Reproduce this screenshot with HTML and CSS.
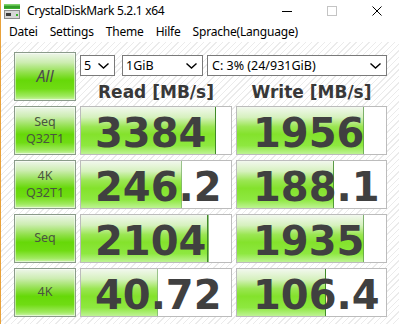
FILE: index.html
```html
<!DOCTYPE html>
<html lang="de">
  <head>
    <meta charset="UTF-8">
    <title>CrystalDiskMark 5.2.1 x64</title>
    <link rel="stylesheet" href="styles.css">
  </head>
  <body>
    <div class="window">
      <div class="titlebar">
        <svg class="app-icon" width="16" height="15" viewBox="0 0 16 15">
          <rect x="0" y="0" width="16" height="5" fill="#3cae2e"/>
          <rect x="0" y="0" width="16" height="1.5" fill="#7fd16a"/>
          <rect x="0" y="2.5" width="16" height="1" fill="#2a8a22"/>
          <rect x="0" y="6" width="16" height="9" fill="#8c8c8c"/>
          <rect x="1" y="7" width="14" height="7" fill="#d6d6d6"/>
          <rect x="2" y="9" width="5" height="3" fill="#3b3b3b"/>
          <rect x="12" y="10" width="2" height="2" fill="#36b52a"/>
        </svg>
        <span class="title">CrystalDiskMark 5.2.1 x64</span>
        <div class="controls">
          <span class="ctl"><svg width="10" height="10" viewBox="0 0 10 10"><line x1="0" y1="5.5" x2="10" y2="5.5" stroke="#000" stroke-width="1"/></svg></span>
          <span class="ctl"><svg width="10" height="10" viewBox="0 0 10 10"><rect x="0.5" y="0.5" width="9" height="9" fill="none" stroke="#c4c4c4" stroke-width="1"/></svg></span>
          <span class="ctl"><svg width="10" height="10" viewBox="0 0 10 10"><path d="M0.5 0.5 L9.5 9.5 M9.5 0.5 L0.5 9.5" stroke="#000" stroke-width="1"/></svg></span>
        </div>
      </div>
      <div class="menubar">
        <span>Datei</span>
        <span>Settings</span>
        <span>Theme</span>
        <span>Hilfe</span>
        <span>Sprache(Language)</span>
      </div>
      <div class="main">
        <div class="label all">All</div>
        <div class="top">
          <div class="selects">
            <div class="sel sel-count">5<svg class="chev" width="11" height="6" viewBox="0 0 11 6"><polyline points="0.5,0.5 5.5,5 10.5,0.5" fill="none" stroke="#000" stroke-width="1.4"/></svg></div>
            <div class="sel sel-size">1GiB<svg class="chev" width="11" height="6" viewBox="0 0 11 6"><polyline points="0.5,0.5 5.5,5 10.5,0.5" fill="none" stroke="#000" stroke-width="1.4"/></svg></div>
            <div class="sel sel-drive">C: 3% (24/931GiB)<svg class="chev" width="11" height="6" viewBox="0 0 11 6"><polyline points="0.5,0.5 5.5,5 10.5,0.5" fill="none" stroke="#000" stroke-width="1.4"/></svg></div>
          </div>
          <div class="heads">
            <div>Read [MB/s]</div>
            <div>Write [MB/s]</div>
          </div>
        </div>

        <div class="label"><span>Seq</span><span>Q32T1</span></div>
        <div class="value read" style="--w: 90%">3384</div>
        <div class="value write" style="--w: 85%">1956</div>

        <div class="label"><span>4K</span><span>Q32T1</span></div>
        <div class="value read" style="--w: 67%">246.2</div>
        <div class="value write" style="--w: 65%">188.1</div>

        <div class="label"><span>Seq</span></div>
        <div class="value read" style="--w: 85%">2104</div>
        <div class="value write" style="--w: 85%">1935</div>

        <div class="label"><span>4K</span></div>
        <div class="value read" style="--w: 51%">40.72</div>
        <div class="value write" style="--w: 60%">106.4</div>
      </div>
    </div>
  </body>
</html>
```

FILE: styles.css
```css
html, body {
  margin: 0;
  padding: 0;
}
body {
  width: 399px;
  height: 324px;
  overflow: hidden;
  font-family: "Noto Sans", sans-serif;
  color: #000;
}
.window {
  height: 324px;
  border-left: 1px solid #e9a23b;
  background-color: #fff;
  display: flex;
  flex-direction: column;
}

/* title bar */
.titlebar {
  height: 22px;
  display: flex;
  align-items: center;
  font-size: 12px;
}
.app-icon {
  margin: 0 7px 0 3px;
}
.title {
  line-height: 22px;
  letter-spacing: -0.3px;
}
.controls {
  margin-left: auto;
  display: flex;
  height: 22px;
}
.ctl {
  width: 45px;
  display: flex;
  align-items: center;
  justify-content: center;
}

/* menu */
.menubar {
  height: 20px;
  line-height: 20px;
  font-size: 12px;
  display: flex;
  padding-left: 2px;
}
.menubar span {
  padding: 0 6px;
  letter-spacing: -0.2px;
}

/* main area */
.main {
  flex: 1;
  display: grid;
  grid-template-columns: 62px 152px 151px;
  grid-auto-rows: 49px;
  column-gap: 4px;
  row-gap: 5px;
  padding: 10px 0 0 13px;
  background: repeating-linear-gradient(135deg, #ffffff 0 3.5px, #ebebeb 3.5px 4.5px);
}

.label {
  box-sizing: border-box;
  border: 1px solid #8a9b8a;
  box-shadow: inset 0 0 0 1px rgba(255, 255, 255, 0.5);
  background: linear-gradient(#eef6ea 0%, #cdedb2 20%, #90e04a 42%, #66d808 58%, #70dc14 76%, #a0ea60 92%, #ccf4ac 100%);
  display: flex;
  flex-direction: column;
  align-items: center;
  justify-content: center;
  font-size: 12.5px;
  line-height: 16.5px;
  color: #4a5540;
}
.label.all {
  font-size: 16px;
  font-style: italic;
  color: #4c4c4c;
}

.top {
  grid-column: span 2;
}
.selects {
  display: flex;
  padding-top: 3px;
}
.sel {
  box-sizing: border-box;
  height: 21px;
  border: 1px solid #7a7a7a;
  background-color: #fff;
  display: flex;
  align-items: center;
  justify-content: space-between;
  padding: 0 5px 0 3px;
  font-size: 12.5px;
}
.sel-count {
  width: 35px;
  margin-right: 7px;
}
.sel-size {
  width: 81px;
  margin-right: 4px;
}
.sel-drive {
  width: 180px;
  padding-left: 4px;
}
.heads {
  display: grid;
  grid-template-columns: 152px 151px;
  column-gap: 4px;
  margin-top: 7px;
  font-family: "DejaVu Sans", sans-serif;
  font-weight: bold;
  font-size: 17px;
  line-height: 18px;
  color: #383838;
  text-align: center;
}

.value {
  box-sizing: border-box;
  border: 1px solid #bcbcbc;
  background-color: #fff;
  background-image:
    linear-gradient(to left, #3f8a28 0 1px, transparent 1px),
    linear-gradient(#f2f8ee 0%, #d6f1be 22%, #9ae652 42%, #84e22c 58%, #8ee840 82%, #bef394 100%);
  background-size: var(--w) 100%;
  background-repeat: no-repeat;
  font-family: "DejaVu Sans", sans-serif;
  font-weight: bold;
  font-size: 40px;
  line-height: 40px;
  padding-top: 6px;
  color: #404040;
  white-space: nowrap;
}
.value.read {
  padding-left: 14px;
}
.value.write {
  padding-left: 16px;
}
```
